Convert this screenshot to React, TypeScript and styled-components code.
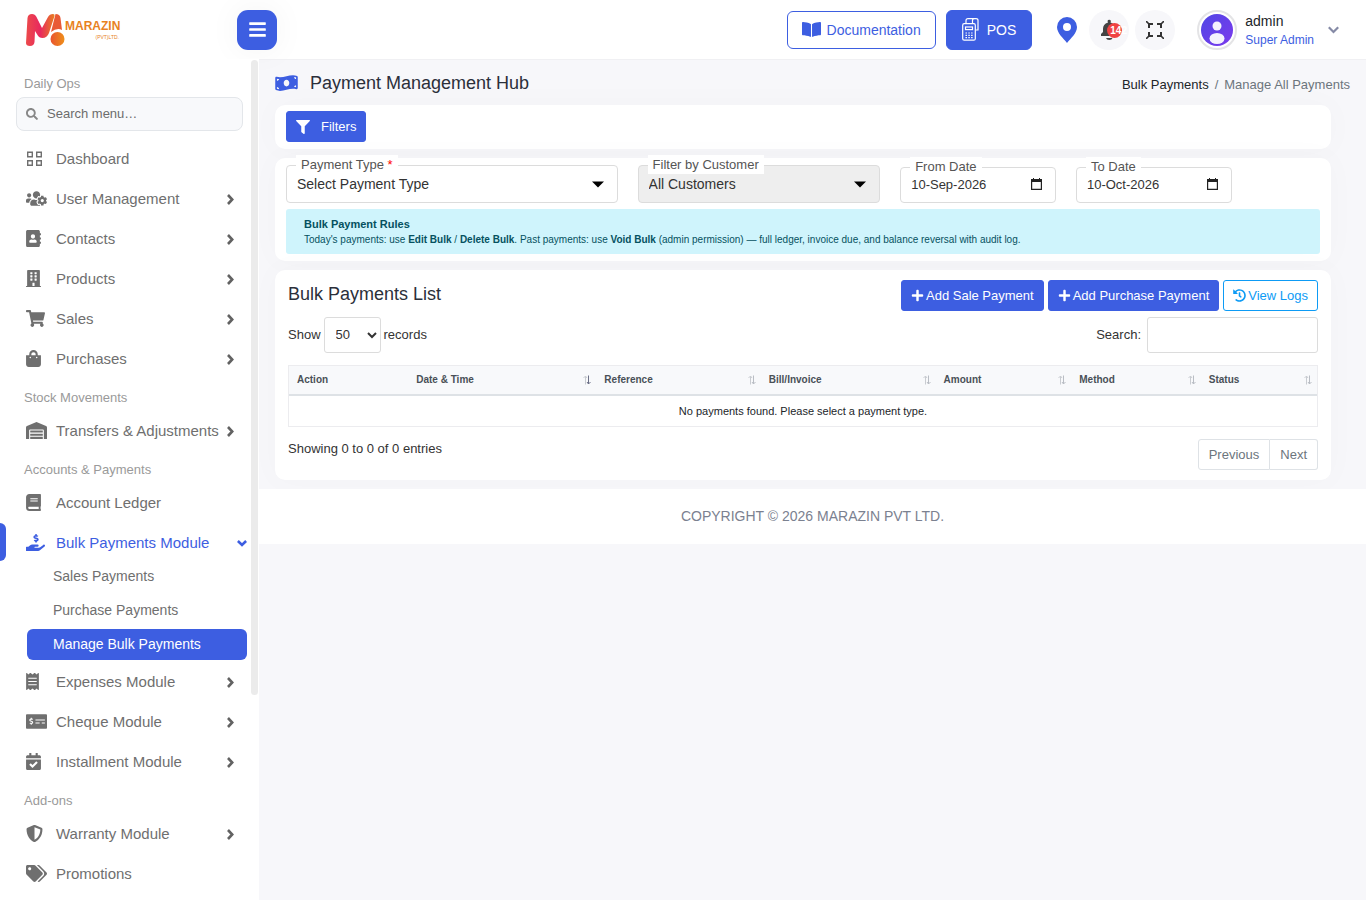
import React from "react";
import styled, { createGlobalStyle, css } from "styled-components";
import {
  FaUsersCog, FaAddressBook, FaBuilding, FaShoppingCart, FaShoppingBag, FaWarehouse, FaBook,
  FaHandHoldingUsd, FaReceipt, FaMoneyCheckAlt, FaCalendarCheck, FaShieldAlt, FaTags, FaBookOpen,
  FaFilter, FaPlus, FaHistory, FaSearch, FaMoneyBillWave, FaBars,
} from "react-icons/fa";

const BLUE = "#3d5ee1";

const Global = createGlobalStyle`
  *, *::before, *::after { box-sizing: border-box; }
  body { margin: 0; background: #f7f7fa; color: #333; font: 13px/20px "Liberation Sans", Arial, sans-serif; }
  button, input, select { font: inherit; color: inherit; }
  button { cursor: pointer; }
  a { color: inherit; text-decoration: none; }
  ul { list-style: none; margin: 0; padding: 0; }
  h1, h2, p { margin: 0; font-weight: 400; }
`;

const Page = styled.div`
  display: flex;
  flex-direction: column;
  height: 100vh;
`;

const Header = styled.header`
  display: flex;
  align-items: center;
  flex: none;
  height: 59px;
  padding: 0 27px 0 26px;
  background: #fff;
`;

const LogoLink = styled.a`
  display: block;
  width: 211px;
  svg { display: block; }
`;

const MenuToggle = styled.button`
  display: flex;
  align-items: center;
  justify-content: center;
  width: 40px;
  height: 40px;
  border: 0;
  border-radius: 11px;
  background: ${BLUE};
  color: #fff;
  font-size: 19px;
  box-shadow: 0 0 31px 3px rgba(44, 50, 63, 0.04);
`;

const HeaderTools = styled.div`
  display: flex;
  align-items: center;
  margin-left: auto;
`;

const HeaderLink = styled.a<{ $solid?: boolean }>`
  display: flex;
  align-items: center;
  gap: ${(p) => (p.$solid ? 8 : 6)}px;
  height: ${(p) => (p.$solid ? 40 : 38)}px;
  padding: 0 ${(p) => (p.$solid ? 15 : 14)}px;
  border: 1px solid ${BLUE};
  border-radius: 6px;
  margin-right: 10px;
  font-size: 14px;
  background: ${(p) => (p.$solid ? BLUE : "#fff")};
  color: ${(p) => (p.$solid ? "#fff" : BLUE)};
`;

const PinButton = styled.button`
  display: flex;
  padding: 0;
  border: 0;
  background: none;
  margin: 0 12px 0 15px;
`;

const RoundButton = styled.button`
  position: relative;
  display: flex;
  align-items: center;
  justify-content: center;
  width: 40px;
  height: 40px;
  padding: 0;
  border: 0;
  border-radius: 50%;
  background: #f7f7fa;
  margin-right: 6px;
`;

const Badge = styled.span`
  position: absolute;
  top: 13px;
  left: 18px;
  width: 15px;
  height: 15px;
  padding-left: 3px;
  border-radius: 50%;
  background: #f04343;
  color: #fff;
  font: bold 10px/16px "Liberation Sans", Arial, sans-serif;
  text-align: left;
`;

const Profile = styled.button`
  display: flex;
  align-items: center;
  gap: 8px;
  padding: 0;
  border: 0;
  background: none;
  margin-left: 16px;
  text-align: left;
`;

const ProfileText = styled.span`
  display: grid;
  margin-right: 6px;
  padding-top: 2px;
  font-size: 14px;
  line-height: 19px;
  color: #212529;
  small { font-size: 12px; color: ${BLUE}; }
`;

const Body = styled.div`
  display: grid;
  grid-template-columns: 259px minmax(0, 1fr);
  flex: 1;
  min-height: 0;
`;

const Sidebar = styled.nav`
  position: relative;
  overflow: hidden;
  padding: 8px 12px 0 0;
  background: #fff;
`;

const ScrollThumb = styled.div`
  position: absolute;
  top: 1px;
  right: 1px;
  width: 7px;
  height: 75.5%;
  border-radius: 4px;
  background: #ebebeb;
`;

const SectionTitle = styled.div`
  height: 32px;
  padding: 9px 0 0 24px;
  line-height: 20px;
  color: #9a9a9a;
  &:first-child { height: 30px; padding-top: 7px; }
`;

const MenuSearch = styled.label`
  display: flex;
  align-items: center;
  gap: 9px;
  height: 34px;
  margin: 0 4px 8px 16px;
  padding: 0 9px;
  border: 1px solid #e3e6ea;
  border-radius: 8px;
  background: #f8f9fb;
  svg { flex: none; width: 12px; height: 12px; color: #888; }
  input {
    flex: 1;
    min-width: 0;
    padding: 0;
    border: 0;
    outline: 0;
    background: none;
    font-size: 13px;
  }
  input::placeholder { color: #6c6c6c; opacity: 1; }
`;

const MenuLink = styled.a<{ $active?: boolean }>`
  position: relative;
  display: flex;
  align-items: center;
  height: 40px;
  padding: 0 13px 0 26px;
  font-size: 15px;
  color: #6f6f6f;
  > svg { margin-left: auto; flex: none; color: #626262; }
  ${(p) =>
    p.$active &&
    css`
      height: 38px;
      padding-top: 2px;
      padding-right: 0;
      color: ${BLUE};
      > svg { color: ${BLUE}; }
      &::before {
        content: "";
        position: absolute;
        left: 0;
        top: 0;
        width: 6px;
        height: 38px;
        border-radius: 0 6px 6px 0;
        background: ${BLUE};
      }
    `}
`;

const MenuIcon = styled.span<{ $width: number }>`
  display: flex;
  width: 30px;
  flex: none;
  padding-bottom: 2px;
  svg { width: ${(p) => p.$width}px; height: 17px; }
`;

const SubMenu = styled.ul`
  display: grid;
  gap: 3px;
  margin: 0 0 2px 27px;
`;

const SubLink = styled.a<{ $active?: boolean }>`
  display: block;
  height: 31px;
  padding-left: 26px;
  border-radius: 6px;
  font-size: 14px;
  line-height: 31px;
  color: ${(p) => (p.$active ? "#fff" : "#6f6f6f")};
  background: ${(p) => (p.$active ? BLUE : "none")};
`;

const Main = styled.main`
  overflow: auto;
  border-top: 1px solid #f0f0f3;
`;

const Content = styled.div`
  padding: 0 35px 9px 16px;
`;

const TitleRow = styled.div`
  display: flex;
  align-items: center;
  justify-content: space-between;
  height: 45px;
  margin-right: -19px;
`;

const PageTitle = styled.h1`
  display: flex;
  align-items: center;
  gap: 12px;
  font-size: 18px;
  line-height: 22px;
  color: #2b2f3a;
  svg { width: 23px; height: 18px; color: ${BLUE}; }
`;

const Crumbs = styled.nav`
  display: flex;
  gap: 6px;
  padding-top: 4px;
  color: #6c757d;
  a { color: #212529; }
`;

const Card = styled.section<{ $pad: string }>`
  padding: ${(p) => p.$pad};
  border-radius: 10px;
  background: #fff;
  box-shadow: 0 0 31px 3px rgba(44, 50, 63, 0.02);
  & + & { margin-top: 9px; }
`;

const Button = styled.button<{ $outline?: boolean; $gap?: number }>`
  display: inline-flex;
  align-items: center;
  gap: ${(p) => p.$gap ?? 2}px;
  height: 31px;
  padding: 0 9px;
  border: 1px solid ${(p) => (p.$outline ? "#0d9bf5" : BLUE)};
  border-radius: 3px;
  background: ${(p) => (p.$outline ? "#fff" : BLUE)};
  color: ${(p) => (p.$outline ? "#0d9bf5" : "#fff")};
`;

const Fields = styled.div`
  display: grid;
  grid-template-columns: 34% 25.4% 17% 17%;
  align-items: end;
`;

const FieldBox = styled.div<{ $short?: boolean }>`
  position: relative;
  margin-right: 20px;
  label {
    position: absolute;
    top: -10px;
    left: 10px;
    padding: 0 5px;
    line-height: 19px;
    background: #fff;
    color: #555;
  }
  label b { color: #f00; font-weight: 400; }
  select, input {
    display: block;
    width: 100%;
    height: ${(p) => (p.$short ? 36 : 38)}px;
    padding: ${(p) => (p.$short ? "0 10px 2px" : "0 10px")};
    border: 1px solid #dcdcdc;
    border-radius: 4px;
    outline: 0;
    appearance: none;
    background: #fff;
    color: #333;
    font-size: ${(p) => (p.$short ? 13 : 14)}px;
    opacity: 1;
  }
  select:disabled { background: #eee; }
  > svg { position: absolute; top: ${(p) => (p.$short ? 11 : 16)}px; right: 14px; pointer-events: none; }
`;

const Notice = styled.div`
  margin-top: 6px;
  height: 45px;
  padding: 8px 18px;
  border-radius: 3px;
  background: #cff4fc;
  color: #055160;
  font-size: 10px;
  line-height: 15px;
  h2 { font-size: 11px; font-weight: 700; line-height: 15px; }
`;

const ListHead = styled.div`
  display: flex;
  align-items: center;
  gap: 4px;
  h2 { margin-right: auto; font-size: 18px; line-height: 22px; padding-bottom: 4px; color: #2b2f3a; }
`;

const ToolRow = styled.div`
  display: flex;
  justify-content: space-between;
  margin: 6px 0 12px;
  label { display: flex; align-items: center; gap: 3px; }
  select {
    width: 57px;
    height: 36px;
    padding: 0 0 2px 7px;
    border: 1px solid #dcdcdc;
    border-radius: 3px;
    background: #fff;
  }
  input {
    width: 171px;
    height: 36px;
    margin-left: 3px;
    border: 1px solid #dcdcdc;
    border-radius: 3px;
  }
`;

const Table = styled.table`
  width: 100%;
  table-layout: fixed;
  border-collapse: separate;
  border-spacing: 0;
  border: 1px solid #ececef;
  th {
    height: 30px;
    padding: 0 5px 0 8px;
    border-bottom: 2px solid #dee2e6;
    background: #f8f9fb;
    color: #495057;
    font-size: 10px;
    line-height: 14px;
    text-align: left;
  }
  th div { display: flex; align-items: center; justify-content: space-between; }
  td { height: 30px; padding: 0; text-align: center; font-size: 11px; color: #212529; }
`;

const ListFoot = styled.div`
  display: flex;
  justify-content: space-between;
  margin-top: 12px;
`;

const Pager = styled.div`
  display: flex;
  button {
    height: 31px;
    padding: 0 10px;
    border: 1px solid #dee2e6;
    background: #fff;
    color: #6c757d;
  }
  button:first-child { border-radius: 3px 0 0 3px; }
  button:last-child { border-radius: 0 3px 3px 0; border-left: 0; }
`;

const Footer = styled.footer`
  height: 55px;
  background: #fff;
  font-size: 14px;
  line-height: 55px;
  text-align: center;
  color: #7b8190;
`;

function Logo() {
  return (
    <svg width="100" height="34" viewBox="0 0 100 34" role="img" aria-label="Marazin Pvt Ltd">
      <defs>
        <linearGradient id="mark" x1="0" y1="0" x2="1" y2="0">
          <stop offset="0" stopColor="#ec4a4a" />
          <stop offset="0.5" stopColor="#e8285f" />
          <stop offset="1" stopColor="#e8801f" />
        </linearGradient>
        <linearGradient id="ball" x1="0" y1="0" x2="1" y2="0">
          <stop offset="0" stopColor="#e9542f" />
          <stop offset="1" stopColor="#ee8f1a" />
        </linearGradient>
      </defs>
      <path d="M0 30L1.500 5Q2 1 6 1Q9 1 10.500 4L16 15L22 4Q23.500 1 27 1Q29 1 28.500 3L23 20Q21 25 16.500 25Q13 25 11.500 22L9 18L8.500 29Q8 33 4 33Q0 33 0 30Z" fill="url(#mark)" />
      <path d="M29.500 1Q34 1 34.500 5L36 17Q31 14.500 25 19Z" fill="#e95a35" />
      <circle cx="31.500" cy="26" r="7" fill="url(#ball)" />
      <text x="39" y="17" fontFamily="'Liberation Sans', sans-serif" fontWeight="700" fontSize="12" fill="#e8821e">MARAZIN</text>
      <text x="93" y="26" textAnchor="end" fontFamily="'Liberation Sans', sans-serif" fontSize="5" fill="#e8821e">(PVT)LTD.</text>
    </svg>
  );
}

function GridIcon() {
  return (
    <svg viewBox="0 0 17 17" fill="none" stroke="currentColor" strokeWidth="1.400">
      <path d="M1.700 2.200h4.600v4.600H1.700zM10.700 2.200h4.600v4.600h-4.600zM1.700 10.700h4.600v4.600H1.700zM10.700 10.700h4.600v4.600h-4.600z" />
    </svg>
  );
}

function ChevronRight() {
  return (
    <svg width="7" height="11" viewBox="0 0 7 11" fill="none" stroke="currentColor" strokeWidth="2.600">
      <path d="M1 1L5.200 5.500L1 10" />
    </svg>
  );
}

function ChevronDown() {
  return (
    <svg width="10" height="7" viewBox="0 0 10 7" fill="none" stroke="currentColor" strokeWidth="2.600">
      <path d="M.9 1L5 5L9.100 1" />
    </svg>
  );
}

function PosIcon() {
  return (
    <svg width="17" height="23" viewBox="0 0 17 23" fill="none" stroke="#fff" strokeWidth="1.200">
      <rect x="0.700" y="5.700" width="12.600" height="16.500" rx="1.500" />
      <path d="M4 5.700V2.500Q4 .7 6 .7H14Q16 .7 16 2.500V12H13.500M4 5.500H10.500V2.500Q10.500 .7 12.500 .7" />
      <rect x="3.500" y="9" width="7" height="2.600" />
      <path d="M3.500 15h1.500m1.300 0h1.500m1.300 0h1.500M3.500 17.300h1.500m1.300 0h1.500m1.300 0h1.500M3.500 19.600h1.500m1.300 0h1.500m1.300 0h1.500" />
    </svg>
  );
}

function Caret() {
  return (
    <svg width="12" height="7" viewBox="0 0 12 7"><path d="M0 .5h12L6 6.500z" fill="#000" /></svg>
  );
}

function CalendarGlyph() {
  return (
    <svg width="11" height="12" viewBox="0 0 11 12"><path fillRule="evenodd" d="M0 1h2V0h1v1h5V0h1v1h2v11H0zM1.200 4v6.800h8.600V4z" fill="#222" /></svg>
  );
}

function SortArrows({ desc }: { desc?: boolean }) {
  return (
    <svg width="8" height="10" viewBox="0 0 8 10" fill="none">
      <path d="M2.500 9.500V1M.5 3L2.500 1 4 3" stroke="#c9ccd1" />
      <path d="M5.500 .5V9M4 7L5.500 9 7.500 7" stroke={desc ? "#6b6f86" : "#b9bdc4"} />
    </svg>
  );
}

type Item = { icon: React.ReactNode; width: number; label: string; leaf?: boolean };

function MenuItems({ items }: { items: Item[] }) {
  return (
    <ul>
      {items.map((it) => (
        <li key={it.label}>
          <MenuLink href="#">
            <MenuIcon $width={it.width}>{it.icon}</MenuIcon>
            {it.label}
            {!it.leaf && <ChevronRight />}
          </MenuLink>
        </li>
      ))}
    </ul>
  );
}

const columns: [string, string][] = [
  ["Action", "11.6%"], ["Date & Time", "18.3%"], ["Reference", "16%"], ["Bill/Invoice", "17%"],
  ["Amount", "13.2%"], ["Method", "12.6%"], ["Status", "11.3%"],
];

export default function App() {
  return (
    <Page>
      <Global />
      <Header>
        <LogoLink href="#"><Logo /></LogoLink>
        <MenuToggle aria-label="Toggle menu"><FaBars /></MenuToggle>
        <HeaderTools>
          <HeaderLink href="#"><FaBookOpen size={19} />Documentation</HeaderLink>
          <HeaderLink href="#" $solid><PosIcon />POS</HeaderLink>
          <PinButton aria-label="Location">
            <svg width="20" height="26" viewBox="0 0 20 26"><path fillRule="evenodd" d="M10 0a10 10 0 0 1 10 10c0 6-6 11-10 16C6 21 0 16 0 10A10 10 0 0 1 10 0zm0 6a4 4 0 1 0 0 8 4 4 0 0 0 0-8z" fill={BLUE} /></svg>
          </PinButton>
          <RoundButton aria-label="Notifications">
            <svg width="18" height="22" viewBox="0 0 18 22" fill="#444"><path d="M7.500 2a1.800 1.800 0 0 1 3.400 0L10.500 3.500C14 4.500 15.500 7 15.500 10v3l1.500 2v2H1v-2l2-2v-3C3 7 4.500 4.500 8 3.500zM6 19h6.500Q12 21 9.250 21T6 19z" /></svg>
            <Badge>142</Badge>
          </RoundButton>
          <RoundButton aria-label="Full screen">
            <svg width="18" height="18" viewBox="0 0 18 18" fill="none" stroke="#333" strokeWidth="2">
              <path d="M3 7V3H7M11 3h4v4M15 11v4h-4M7 15H3v-4" />
              <path d="M0 0L2.500 2.500M18 0L15.500 2.500M0 18L2.500 15.500M18 18L15.500 15.500" strokeWidth="1.600" />
            </svg>
          </RoundButton>
          <Profile>
            <svg width="40" height="40" viewBox="0 0 40 40">
              <defs>
                <linearGradient id="avatar" x1="0" y1="0" x2="1" y2="1">
                  <stop offset="0" stopColor="#4f46e5" />
                  <stop offset="1" stopColor="#7c3aed" />
                </linearGradient>
              </defs>
              <circle cx="20" cy="20" r="19" fill="#fff" stroke="#e4e4e6" strokeWidth="2" />
              <circle cx="20" cy="20" r="16" fill="url(#avatar)" />
              <circle cx="20" cy="16" r="4.500" fill="#f4f2fd" />
              <ellipse cx="20" cy="28.500" rx="7.500" ry="5.500" fill="#f4f2fd" />
            </svg>
            <ProfileText>admin<small>Super Admin</small></ProfileText>
            <svg width="11" height="8" viewBox="0 0 11 8" fill="none" stroke="#858aa6" strokeWidth="2.200"><path d="M.8 1.200L5.500 6l4.700-4.800" /></svg>
          </Profile>
        </HeaderTools>
      </Header>
      <Body>
        <Sidebar>
          <SectionTitle>Daily Ops</SectionTitle>
          <MenuSearch>
            <FaSearch />
            <input type="text" aria-label="Search menu" placeholder="Search menu…" />
          </MenuSearch>
          <MenuItems
            items={[
              { icon: <GridIcon />, width: 17, label: "Dashboard", leaf: true },
              { icon: <FaUsersCog />, width: 21, label: "User Management" },
              { icon: <FaAddressBook />, width: 15, label: "Contacts" },
              { icon: <FaBuilding />, width: 15, label: "Products" },
              { icon: <FaShoppingCart />, width: 19, label: "Sales" },
              { icon: <FaShoppingBag />, width: 15, label: "Purchases" },
            ]}
          />
          <SectionTitle>Stock Movements</SectionTitle>
          <MenuItems items={[{ icon: <FaWarehouse />, width: 21, label: "Transfers & Adjustments" }]} />
          <SectionTitle>Accounts &amp; Payments</SectionTitle>
          <MenuItems items={[{ icon: <FaBook />, width: 15, label: "Account Ledger", leaf: true }]} />
          <MenuLink href="#" $active>
            <MenuIcon $width={19}><FaHandHoldingUsd /></MenuIcon>
            Bulk Payments Module
            <ChevronDown />
          </MenuLink>
          <SubMenu>
            <li><SubLink href="#">Sales Payments</SubLink></li>
            <li><SubLink href="#">Purchase Payments</SubLink></li>
            <li><SubLink href="#" $active>Manage Bulk Payments</SubLink></li>
          </SubMenu>
          <MenuItems
            items={[
              { icon: <FaReceipt />, width: 13, label: "Expenses Module" },
              { icon: <FaMoneyCheckAlt />, width: 21, label: "Cheque Module" },
              { icon: <FaCalendarCheck />, width: 15, label: "Installment Module" },
            ]}
          />
          <SectionTitle>Add-ons</SectionTitle>
          <MenuItems
            items={[
              { icon: <FaShieldAlt />, width: 17, label: "Warranty Module" },
              { icon: <FaTags />, width: 21, label: "Promotions", leaf: true },
            ]}
          />
          <ScrollThumb />
        </Sidebar>
        <Main>
          <Content>
            <TitleRow>
              <PageTitle><FaMoneyBillWave />Payment Management Hub</PageTitle>
              <Crumbs aria-label="Breadcrumb">
                <a href="#">Bulk Payments</a><span>/</span><span>Manage All Payments</span>
              </Crumbs>
            </TitleRow>
            <Card $pad="6px 11px 7px">
              <Button $gap={11}><FaFilter size={14} />Filters</Button>
            </Card>
            <Card $pad="7px 11px">
              <Fields>
                <FieldBox>
                  <select id="type"><option>Select Payment Type</option></select>
                  <label htmlFor="type">Payment Type <b>*</b></label>
                  <Caret />
                </FieldBox>
                <FieldBox>
                  <select id="customer" disabled><option>All Customers</option></select>
                  <label htmlFor="customer">Filter by Customer</label>
                  <Caret />
                </FieldBox>
                <FieldBox $short>
                  <input id="from" type="text" defaultValue="10-Sep-2026" />
                  <label htmlFor="from">From Date</label>
                  <CalendarGlyph />
                </FieldBox>
                <FieldBox $short>
                  <input id="to" type="text" defaultValue="10-Oct-2026" />
                  <label htmlFor="to">To Date</label>
                  <CalendarGlyph />
                </FieldBox>
              </Fields>
              <Notice>
                <h2>Bulk Payment Rules</h2>
                <p>
                  Today's payments: use <b>Edit Bulk</b> / <b>Delete Bulk</b>. Past payments: use <b>Void Bulk</b> (admin
                  permission) — full ledger, invoice due, and balance reversal with audit log.
                </p>
              </Notice>
            </Card>
            <Card $pad="10px 13px">
              <ListHead>
                <h2>Bulk Payments List</h2>
                <Button><FaPlus size={13} />Add Sale Payment</Button>
                <Button><FaPlus size={13} />Add Purchase Payment</Button>
                <Button $outline><FaHistory size={13} />View Logs</Button>
              </ListHead>
              <ToolRow>
                <label>Show <select defaultValue="50"><option>50</option></select> records</label>
                <label>Search: <input type="search" /></label>
              </ToolRow>
              <Table>
                <colgroup>{columns.map(([name, w]) => <col key={name} width={w} />)}</colgroup>
                <thead>
                  <tr>
                    {columns.map(([name], i) => (
                      <th key={name} scope="col">
                        <div>{name}{i > 0 && <SortArrows desc={i === 1} />}</div>
                      </th>
                    ))}
                  </tr>
                </thead>
                <tbody>
                  <tr><td colSpan={7}>No payments found. Please select a payment type.</td></tr>
                </tbody>
              </Table>
              <ListFoot>
                <p>Showing 0 to 0 of 0 entries</p>
                <Pager><button>Previous</button><button>Next</button></Pager>
              </ListFoot>
            </Card>
          </Content>
          <Footer>COPYRIGHT © 2026 MARAZIN PVT LTD.</Footer>
        </Main>
      </Body>
    </Page>
  );
}
